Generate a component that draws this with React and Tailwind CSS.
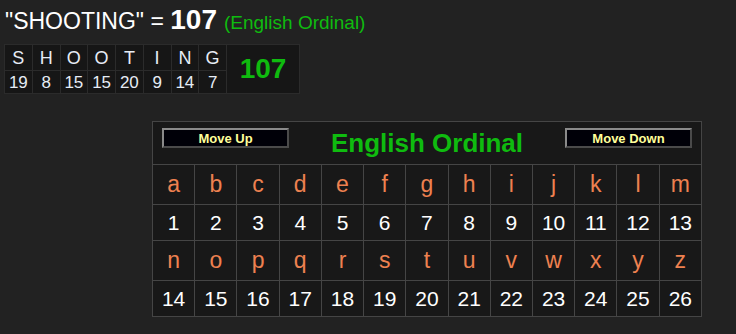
import React from 'react'

const alphabet = 'abcdefghijklmnopqrstuvwxyz'.split('')
const word = 'SHOOTING'

// english ordinal: a=1 ... z=26
const valueOf = (ch) => ch.toLowerCase().charCodeAt(0) - 96

function Breakdown() {
    const letters = word.split('')
    const total = letters.reduce((sum, ch) => sum + valueOf(ch), 0)
    return (
        <table className="ml-[4px] mt-[8px] border-collapse bg-[#161616]">
            <tbody>
                <tr className="h-[26px]">
                    {letters.map((ch, i) => (
                        <td key={i} className="w-[27.75px] border border-[#2b2b2b] p-0 text-center text-[18px] leading-none text-[#e6ecf5]">
                            {ch}
                        </td>
                    ))}
                    <td rowSpan={2} className="w-[73px] border border-[#2b2b2b] p-0 text-center text-[28px] font-bold leading-none text-[#0fbb0f]">
                        {total}
                    </td>
                </tr>
                <tr className="h-[23px]">
                    {letters.map((ch, i) => (
                        <td key={i} className="border border-[#2b2b2b] p-0 text-center text-[17px] leading-none text-[#e6ecf5]">
                            {valueOf(ch)}
                        </td>
                    ))}
                </tr>
            </tbody>
        </table>
    )
}

function NavButton({ children }) {
    return (
        <button className="h-[20px] w-[127px] border-2 border-t-[#8a8a8a] border-l-[#8a8a8a] border-r-[#4a4a4a] border-b-[#4a4a4a] bg-[#000008] text-[13px] font-bold leading-none text-[#ffff99]">
            {children}
        </button>
    )
}

function CipherTable() {
    const rows = [alphabet.slice(0, 13), alphabet.slice(13)]
    return (
        <table className="ml-[152px] mt-[27px] w-[550px] table-fixed border-collapse bg-[#181818]">
            <tbody>
                <tr className="h-[43px]">
                    <td colSpan={13} className="border border-[#454545] p-0 align-top">
                        <div className="flex items-start justify-between px-[9px] pt-[6px]">
                            <NavButton>Move Up</NavButton>
                            <span className="mt-[2px] text-[26px] font-bold leading-none text-[#0fbb0f]">English Ordinal</span>
                            <NavButton>Move Down</NavButton>
                        </div>
                    </td>
                </tr>
                {rows.map((row, r) => (
                    <React.Fragment key={r}>
                        <tr className="h-[40px]">
                            {row.map((ch) => (
                                <td key={ch} className="border border-[#454545] p-0 text-center text-[23px] leading-none text-[#ee8150]">
                                    {ch}
                                </td>
                            ))}
                        </tr>
                        <tr className="h-[36px]">
                            {row.map((ch) => (
                                <td key={ch} className="border border-[#454545] p-0 text-center text-[21px] leading-none text-white">
                                    {valueOf(ch)}
                                </td>
                            ))}
                        </tr>
                    </React.Fragment>
                ))}
            </tbody>
        </table>
    )
}

export default function App() {
    return (
        <div className="min-h-screen w-full bg-[#222222] font-['Liberation_Sans',Arial,sans-serif]">
            <div className="flex items-baseline pl-[5px] pt-[7px] leading-[26px] text-white">
                <span className="text-[23px]">"{word}" =&nbsp;</span>
                <span className="text-[28px] font-bold">107</span>
                <span className="ml-[7px] text-[19px] text-[#0fbb0f]">(English Ordinal)</span>
            </div>
            <Breakdown />
            <CipherTable />
        </div>
    )
}
